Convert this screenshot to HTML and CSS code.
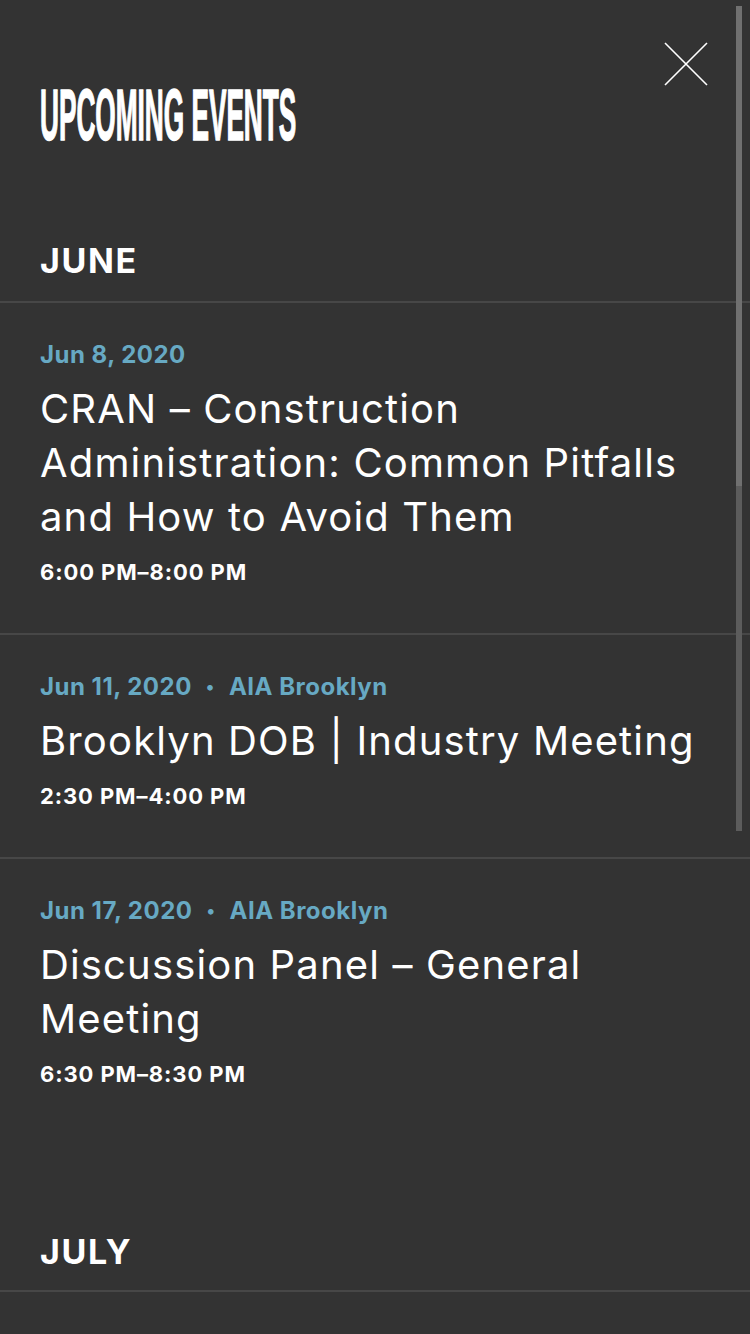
FILE: index.html
```html
<!DOCTYPE html>
<html lang="en">
<head>
<meta charset="utf-8">
<title>Upcoming Events</title>
<link rel="stylesheet" href="styles.css">
</head>
<body>
<div class="panel">
  <header class="header">
    <h1 class="page-title">UPCOMING EVENTS</h1>
    <button class="close" aria-label="Close">
      <svg width="44" height="44" viewBox="0 0 44 44"><path d="M1 1 L43 43 M43 1 L1 43" stroke="#fff" stroke-width="1.6" fill="none"/></svg>
    </button>
  </header>

  <section class="month">
    <h2 class="month-name">JUNE</h2>
    <article class="event">
      <div class="meta"><span>Jun 8, 2020</span></div>
      <h3 class="event-title">CRAN – Construction Administration: Common Pitfalls and How to Avoid Them</h3>
      <div class="time">6:00 PM–8:00 PM</div>
    </article>
    <article class="event">
      <div class="meta"><span>Jun 11, 2020</span><span class="dot">•</span><span>AIA Brooklyn</span></div>
      <h3 class="event-title">Brooklyn DOB | Industry Meeting</h3>
      <div class="time">2:30 PM–4:00 PM</div>
    </article>
    <article class="event event-last">
      <div class="meta"><span>Jun 17, 2020</span><span class="dot">•</span><span>AIA Brooklyn</span></div>
      <h3 class="event-title">Discussion Panel – General Meeting</h3>
      <div class="time">6:30 PM–8:30 PM</div>
    </article>
  </section>

  <section class="month">
    <h2 class="month-name">JULY</h2>
  </section>

  <div class="scrollbar"><div class="scrollbar-thumb"></div></div>
</div>
</body>
</html>
```

FILE: styles.css
```css
html, body {
  margin: 0;
  padding: 0;
  background: #333333;
}
body {
  width: 750px;
  height: 1334px;
  overflow: hidden;
  font-family: Inter, "Liberation Sans", sans-serif;
  color: #ffffff;
}
.panel {
  position: relative;
  min-height: 1334px;
}
.header {
  display: grid;
  grid-template-columns: 1fr;
  padding: 42px 0 0 40px;
}
.page-title {
  grid-area: 1 / 1;
  align-self: start;
  margin: 37px 0 0 0;
  font-family: "Liberation Sans", Arial, sans-serif;
  font-weight: 700;
  font-size: 72px;
  line-height: 72px;
  height: 72px;
  white-space: nowrap;
  transform: scaleX(0.364);
  transform-origin: left center;
  -webkit-text-stroke: 1.5px #ffffff;
}
.close {
  grid-area: 1 / 1;
  justify-self: end;
  align-self: start;
  margin-right: 42px;
  width: 44px;
  height: 44px;
  padding: 0;
  border: 0;
  background: none;
  display: block;
  position: relative;
}
.close svg { display: block; }

.month { display: flex; flex-direction: column; }
.month:first-of-type { margin-top: 90px; }
.month-name {
  margin: 0;
  padding: 0 40px 20px;
  font-size: 34px;
  line-height: 40px;
  font-weight: 700;
  letter-spacing: 1.6px;
  border-bottom: 2px solid #474747;
}
.month + .month { margin-top: 97px; }
.month + .month .month-name { padding-bottom: 18px; }

.event {
  padding: 37px 40px 46px;
  border-bottom: 2px solid #474747;
}
.event-last { border-bottom: 0; }
.meta {
  display: flex;
  align-items: center;
  font-size: 24px;
  line-height: 30px;
  font-weight: 700;
  letter-spacing: 0.5px;
  color: #67a9c3;
}
.dot {
  margin: 0 14px;
  font-size: 18px;
}
.event-title {
  margin: 12px 0 0;
  font-size: 40px;
  line-height: 54px;
  font-weight: 400;
  letter-spacing: 1.15px;
}
.time {
  margin-top: 13px;
  font-size: 22px;
  line-height: 30px;
  font-weight: 700;
  letter-spacing: 0.9px;
}
.scrollbar {
  position: absolute;
  top: 6px;
  left: 736px;
  width: 6px;
  height: 825px;
  background: #5c5c5c;
}
.scrollbar-thumb {
  height: 480px;
  background: #707070;
}
```
